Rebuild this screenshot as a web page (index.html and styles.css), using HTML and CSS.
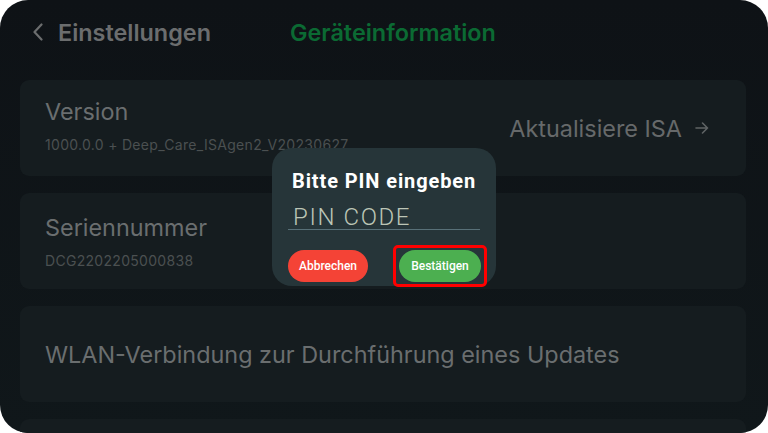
FILE: index.html
```html
<!DOCTYPE html>
<html lang="de">
<head>
<meta charset="utf-8">
<title>Geräteinformation</title>
<link rel="stylesheet" href="styles.css">
</head>
<body>
<div class="screen">
  <header class="topbar">
    <div class="back">
      <svg class="chev" width="12" height="18" viewBox="0 0 12 18"><path d="M9.5 1.5 L2.5 9 L9.5 16.5" fill="none" stroke="#6b6d6e" stroke-width="2.2" stroke-linecap="round" stroke-linejoin="round"/></svg>
      <span class="back-label">Einstellungen</span>
    </div>
    <h1 class="title">Geräteinformation</h1>
  </header>
  <main class="list">
    <section class="card card-split">
      <div class="card-text card-text-raised">
        <div class="card-title">Version</div>
        <div class="card-sub">1000.0.0 + Deep_Care_ISAgen2_V20230627</div>
      </div>
      <div class="card-action">
        <span>Aktualisiere ISA</span>
        <svg width="14" height="12" viewBox="0 0 14 12"><path d="M1 6 H12.5 M7.5 1 L12.5 6 L7.5 11" fill="none" stroke="#5f6364" stroke-width="1.6" stroke-linecap="round" stroke-linejoin="round"/></svg>
      </div>
    </section>
    <section class="card">
      <div class="card-text">
        <div class="card-title">Seriennummer</div>
        <div class="card-sub">DCG2202205000838</div>
      </div>
    </section>
    <section class="card card-single">
      <div class="card-title">WLAN-Verbindung zur Durchführung eines Updates</div>
    </section>
    <section class="card"></section>
  </main>
  <div class="dialog">
    <div class="dialog-title">Bitte PIN eingeben</div>
    <div class="pin-field">PIN CODE</div>
    <div class="dialog-actions">
      <button class="btn btn-cancel">Abbrechen</button>
      <span class="highlight"><button class="btn btn-ok">Bestätigen</button></span>
    </div>
  </div>
</div>
</body>
</html>
```
FILE: styles.css
```css
html, body {
  margin: 0;
  padding: 0;
  background: #ffffff;
}
.screen {
  position: relative;
  width: 768px;
  height: 433px;
  border-radius: 28px;
  overflow: hidden;
  background: linear-gradient(180deg, #0e1216 0%, #10171a 100%);
  font-family: Inter, "Noto Sans", sans-serif;
}
.topbar {
  height: 64px;
  display: flex;
  align-items: center;
  padding-left: 32px;
  box-sizing: border-box;
}
.back {
  display: flex;
  align-items: center;
  gap: 14px;
  width: 258px;
}
.chev { display: block; }
.back-label {
  color: #6b6d6e;
  font-size: 23.4px;
  font-weight: 600;
}
.title {
  margin: 0;
  color: #0b6a33;
  font-size: 23.4px;
  font-weight: 600;
}
.list {
  display: flex;
  flex-direction: column;
  gap: 17px;
  padding: 16px 22px 0 20px;
}
.card {
  flex: none;
  height: 96px;
  border-radius: 9px;
  background: #151c1f;
  box-sizing: border-box;
  padding: 0 25px;
  display: flex;
  align-items: center;
}
.card-split {
  justify-content: space-between;
  padding-right: 37px;
}
.card-text {
  display: flex;
  flex-direction: column;
  gap: 10px;
}
.card-text-raised {
  padding-bottom: 7px;
}
.card-title {
  color: #6a6e6f;
  font-size: 23.4px;
  font-weight: 400;
}
.card-sub {
  color: #4b5051;
  font-size: 14px;
  letter-spacing: 0.3px;
}
.card-action {
  display: flex;
  align-items: center;
  gap: 13px;
  color: #66696a;
  font-size: 23.4px;
}
.card-action svg { display: block; }
.dialog {
  position: absolute;
  left: 272px;
  top: 148px;
  width: 224px;
  height: 138px;
  box-sizing: border-box;
  border-radius: 20px;
  background: #263539;
  padding: 21px 16px 0 16px;
  font-family: Roboto, "Liberation Sans", sans-serif;
}
.dialog-title {
  color: #ffffff;
  font-size: 20px;
  font-weight: 700;
  letter-spacing: 0.9px;
  padding-left: 4px;
  white-space: nowrap;
}
.pin-field {
  margin-top: 11.5px;
  padding-left: 5px;
  color: #bcc5b6;
  font-size: 24px;
  font-weight: 300;
  letter-spacing: 1.6px;
  line-height: 24px;
  border-bottom: 1.5px solid #587078;
}
.dialog-actions {
  margin-top: 15.5px;
  display: flex;
  justify-content: space-between;
  align-items: center;
}
.btn {
  border: none;
  height: 32px;
  border-radius: 16px;
  color: #ffffff;
  font-family: Roboto, "Liberation Sans", sans-serif;
  font-size: 12px;
  font-weight: 500;
  padding: 0;
}
.btn-cancel {
  width: 80px;
  background: #f44336;
}
.btn-ok {
  width: 82px;
  background: #4caf50;
  display: block;
}
.highlight {
  display: block;
  border: 3px solid #ff0000;
  border-radius: 5px;
  padding: 2px 3px;
  margin-right: -7px;
}
```
